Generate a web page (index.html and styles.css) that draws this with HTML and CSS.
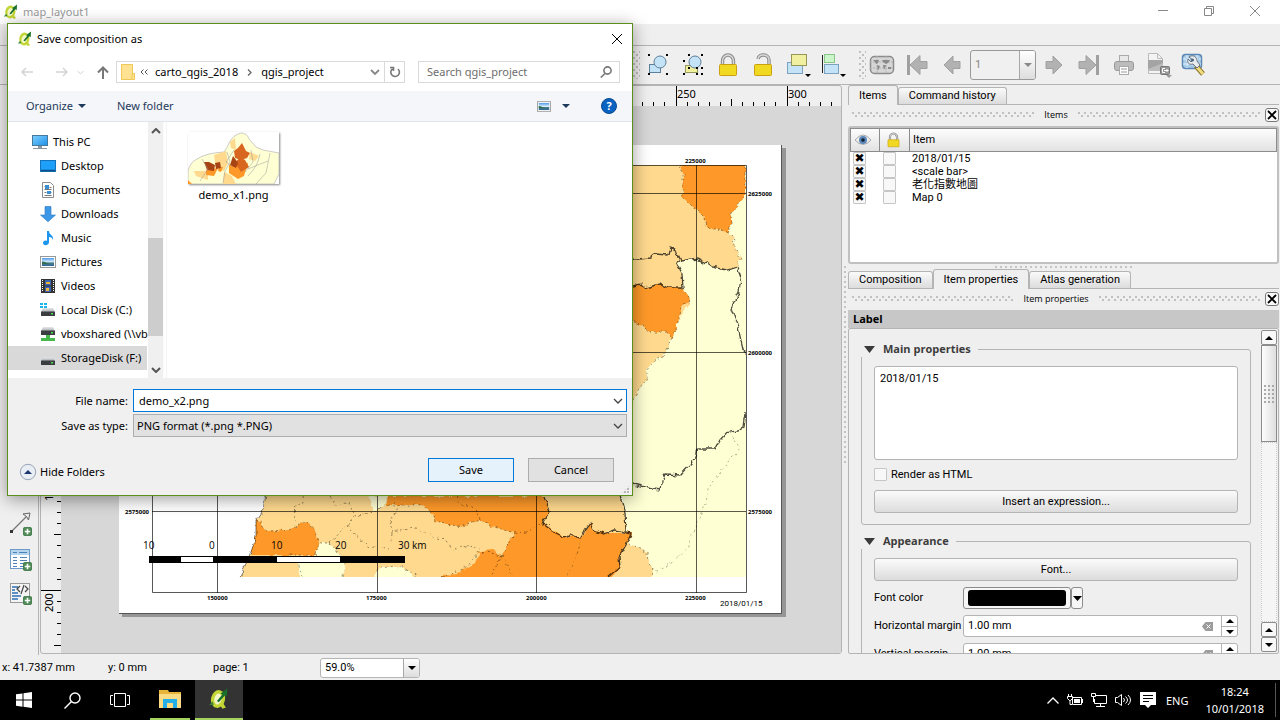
FILE: index.html
```html
<!DOCTYPE html>
<html lang="en">
<head>
<meta charset="utf-8">
<title>map_layout1</title>
<link rel="stylesheet" href="styles.css">
</head>
<body>
<svg class="defs" aria-hidden="true">
  <defs>
    <linearGradient id="blue" x1="0" y1="0" x2="1" y2="1"><stop offset="0" stop-color="#7fd0ff"/><stop offset="1" stop-color="#1e90e8"/></linearGradient>
    <linearGradient id="disk" x1="0" y1="0" x2="0" y2="1"><stop offset="0" stop-color="#e6e8ea"/><stop offset="1" stop-color="#a9adb1"/></linearGradient>
    <linearGradient id="sky" x1="0" y1="0" x2="0" y2="1"><stop offset="0" stop-color="#4f9ae8"/><stop offset=".5" stop-color="#dcefff"/><stop offset=".6" stop-color="#4a7d80"/><stop offset="1" stop-color="#2f6a9c"/></linearGradient>
    <symbol id="qgis" viewBox="0 0 16 16"><ellipse cx="7.300" cy="8" rx="3.900" ry="5.300" transform="rotate(12 7.300 8)" fill="#f3f7c8" stroke="#c3d636" stroke-width="2.400"/><path d="m8 11 2.500 4 2.500-.8-2-3.200z" fill="#c3d636"/><path d="M6.500 9.500 10.400 4.800 9 4.200 14 .4l-.3 5.800-1.300-.9-4.500 5z" fill="#18702a"/><path d="m.8 12.600 2.500-2.800 1 2.400z" fill="#3b8a38"/></symbol>
    <symbol id="chev" viewBox="0 0 10 6"><path d="m1 1 4 4 4-4" fill="none" stroke="currentColor" stroke-width="1.300"/></symbol>
    <symbol id="tri" viewBox="0 0 8 4"><path d="M0 0h8L4 4z" fill="currentColor"/></symbol>
    <symbol id="plus" viewBox="0 0 10 10"><rect x=".5" y=".5" width="9" height="9" rx="1.500" fill="#4f8c57" stroke="#3f7647"/><path d="M5 2v6M2 5h6" stroke="#fff" stroke-width="1.800"/></symbol>
    <symbol id="clear" viewBox="0 0 11 9"><path d="M3.500 0H11v9H3.500L0 4.500z" fill="#9b9b9b"/><path d="m4.500 2.500 4 4m0-4-4 4" stroke="#fff"/></symbol>
    <symbol id="lock" viewBox="0 0 20 24"><path d="M4.500 12V8a5.500 6 0 0 1 11 0v4" fill="none" stroke="#8a8a8a" stroke-width="3.400"/><path d="M4.500 12V8a5.500 6 0 0 1 11 0v4" fill="none" stroke="#dadada" stroke-width="1.400"/><rect x="1.500" y="11.500" width="17" height="11" rx="1" fill="#f2d921" stroke="#c9a011"/></symbol>
    <symbol id="disk-i" viewBox="0 0 16 16"><path d="M3 6h10l2 4H1z" fill="url(#disk)"/><rect x="1" y="9.500" width="14" height="4.500" rx=".6" fill="#3b3e41"/><rect x="11" y="11" width="2" height="1.500" fill="#4fe04f"/></symbol>
    <symbol id="photo" viewBox="0 0 16 12"><rect x=".5" y=".5" width="15" height="11" fill="#fff" stroke="#989898"/><rect x="2" y="2" width="12" height="8" fill="url(#sky)"/><path d="M2 5.500c3 0 5 2 8 2.500H2z" fill="#356d51"/></symbol>
    <symbol id="close" viewBox="0 0 12 12"><path d="m1 1 10 10M11 1 1 11" stroke="currentColor" fill="none"/></symbol>
    <symbol id="bigarrow" viewBox="0 0 20 20"><path d="M2 6.500h7V1l9 9-9 9v-5.500H2z" fill="#b2b2b2" stroke="#a0a0a0"/></symbol>
  </defs>
</svg>

<header class="titlebar">
  <svg class="ic16"><use href="#qgis"/></svg>
  <h1>map_layout1</h1>
  <div class="winbtns">
    <button type="button" aria-label="Minimize"><svg width="12" height="12"><path d="M1 5.500h10" stroke="#888"/></svg></button>
    <button type="button" aria-label="Restore"><svg width="12" height="12"><path d="M1.500 3.500h7v7h-7zM3.500 3.500v-2h7v7h-2" fill="none" stroke="#888"/></svg></button>
    <button type="button" aria-label="Close"><svg width="12" height="12" color="#888"><use href="#close"/></svg></button>
  </div>
</header>
<div class="menubar"></div>

<div class="toolbar">
  <i class="grip-v"></i>
  <button type="button" aria-label="Group"><svg width="24" height="24"><rect x="3.500" y="11.500" width="11" height="8" fill="#c5e3f6" stroke="#5d7f99"/><circle cx="14" cy="9" r="6" fill="#c5e3f6" stroke="#5d7f99"/><path d="M2 1h2v2H2zM20 1h2v2h-2zM2 20h2v2H2zM20 20h2v2h-2z"/></svg></button>
  <button type="button" aria-label="Ungroup"><svg width="24" height="24"><rect x="4.500" y="12.500" width="12" height="7" fill="#f1f09f" stroke="#97975a"/><circle cx="14" cy="9" r="6" fill="#c5e3f6" stroke="#5d7f99"/><path d="M7 1h2v2H7zM20 1h2v2h-2zM2 7h2v2H2zM2 20h2v2H2zM20 20h2v2h-2zM7 14h2v2H7zM15 14h2v2h-2zM20 14h2v2h-2zM15 20h2v2h-2z"/></svg></button>
  <button type="button" aria-label="Lock"><svg width="20" height="24"><use href="#lock"/></svg></button>
  <button type="button" aria-label="Unlock"><svg width="20" height="24"><path d="M5 6c1-6 11-5 11 1v5" fill="none" stroke="#8a8a8a" stroke-width="3.400"/><path d="M5 6c1-6 11-5 11 1v5" fill="none" stroke="#dadada" stroke-width="1.400"/><rect x="1.500" y="11.500" width="17" height="11" rx="1" fill="#f2d921" stroke="#c9a011"/></svg></button>
  <button type="button" aria-label="Raise"><svg width="26" height="26"><rect x="2.500" y="10.500" width="15" height="11" fill="#c5e3f6" stroke="#7ba3c0"/><rect x="6.500" y="2.500" width="15" height="11" fill="#f1f0a0" stroke="#97975a"/><path d="M20 22h6l-3 3z"/></svg></button>
  <button type="button" aria-label="Align"><svg width="26" height="26"><path d="M2.500 3v18" stroke="#222"/><rect x="4.500" y="2.500" width="10" height="8" fill="#ccf5cb" stroke="#8ac58a"/><rect x="4.500" y="12.500" width="14" height="9" fill="#c5e3f6" stroke="#7ba3c0"/><path d="M20 22h6l-3 3z"/></svg></button>
  <i class="grip-v"></i>
  <button type="button" class="atlas" aria-label="Preview atlas"><svg width="26" height="20"><rect x="1.500" y="1.500" width="23" height="17" rx="4" fill="#d6d6d6" stroke="#8b8b8b" stroke-width="1.500"/><path d="M8 1v18M17 1v18M1 7h24M1 13h24" stroke="#b2b2b2" stroke-dasharray="2 1"/><path d="M4 5h6l-1 3-2 1-1-2zM8 10l3 1-2 5zM13 5h8l-2 3-2 1-3-2zM14 10h3l-2 5zM19 12h3v2h-3z" fill="#8a8a8a"/></svg></button>
  <button type="button" aria-label="First feature"><svg width="22" height="22"><path d="M2.500 1v20" stroke="#a0a0a0" stroke-width="3"/><path d="M21 7.500h-7V1.500l-10 9.500 10 9.500V14.500h7z" fill="#b2b2b2" stroke="#a0a0a0"/></svg></button>
  <button type="button" aria-label="Previous feature"><svg class="flip" width="20" height="20"><use href="#bigarrow"/></svg></button>
  <div class="combo page-combo"><input type="text" value="1" aria-label="Atlas page"><button type="button" aria-label="Pages"><svg width="8" height="4"><use href="#tri"/></svg></button></div>
  <button type="button" aria-label="Next feature"><svg width="20" height="20"><use href="#bigarrow"/></svg></button>
  <button type="button" aria-label="Last feature"><svg width="22" height="22"><path d="M19.500 1v20" stroke="#a0a0a0" stroke-width="3"/><path d="M1 7.500h7V1.500l10 9.500-10 9.500V14.500H1z" fill="#b2b2b2" stroke="#a0a0a0"/></svg></button>
  <button type="button" aria-label="Print atlas"><svg width="22" height="22"><rect x="6.500" y="1.500" width="9" height="8" fill="#e8e8e8" stroke="#aaa"/><rect x="1.500" y="7.500" width="19" height="9" rx="2.500" fill="#bcbcbc" stroke="#999"/><rect x="6.500" y="12.500" width="9" height="8" fill="#fff" stroke="#aaa"/><path d="M8 15h6M8 18h6" stroke="#999"/></svg></button>
  <button type="button" aria-label="Export atlas"><svg width="26" height="26"><path d="M2.500 1.500h9l5 5v15h-14z" fill="#f4f4f4" stroke="#bbb"/><path d="M11.500 1.500v5h5" fill="none" stroke="#bbb"/><rect x="2" y="8" width="15" height="11" fill="#a4a4a4"/><path d="m2 17 15-6v8H2z" fill="#bcbcbc"/><rect x="14.500" y="14.500" width="9" height="8" rx="1" fill="#999" stroke="#777"/><path d="M19 16.500h-2.500v4H19m-1-2h4.500m-2-1.500 1.500 1.500-1.500 1.500" stroke="#fff" fill="none"/><path d="M20 23h6l-3 3z" fill="#999"/></svg></button>
  <button type="button" aria-label="Atlas settings"><svg width="26" height="26"><rect x="1.500" y="2.500" width="19" height="14" rx="3" fill="#a9cbea" stroke="#5c87b4" stroke-width="1.500"/><path d="M6 3v13M16 3v13M2 7h18M2 12h18" stroke="#e8f2fb" stroke-dasharray="3 1"/><path d="m15 14 7 8" stroke="#8d772c" stroke-width="5"/><path d="m16 15 6 7" stroke="#f0dc80" stroke-width="3"/><path d="M8 5c4-3 8 0 8 4l3 4-3 3-4-4c-4 1-6-1-5-5l3 3 2-2z" fill="#e9ecef" stroke="#68727c"/><circle cx="11.500" cy="8" r="1.500" fill="#4a5f78"/></svg></button>
</div>

<main class="main">
  <aside class="sidebar" aria-label="Tools">
    <button type="button" aria-label="Add shape"><svg width="28" height="24"><circle cx="5" cy="13" r="4" fill="#2f7ff0"/><use href="#plus" x="16" y="9" width="10" height="10"/><path d="M22 16h6l-3 3z"/></svg></button>
    <button type="button" aria-label="Add arrow"><svg width="24" height="24"><path d="M4 19 20 3" stroke="#777" stroke-width="1.300"/><path d="m15 2 7-1-1.500 7-2-3.500z" fill="#eee" stroke="#666"/><rect x="2" y="18" width="3" height="3" fill="#333"/><use href="#plus" x="15" y="15" width="9" height="9"/></svg></button>
    <button type="button" aria-label="Add table"><svg width="24" height="24"><rect x="2.500" y="2.500" width="19" height="19" fill="#fff" stroke="#6d9ac6"/><path d="M3 3h18v5H3z" fill="#b5d4ee"/><path d="M5 5.500h4m2 0h8M5 10.500h4m3 0h7M5 13.500h4m3 0h7M5 16.500h4m3 0h7M5 19.500h4m3 0h7" stroke="#4b82b8"/><use href="#plus" x="15" y="15" width="9" height="9"/></svg></button>
    <button type="button" aria-label="Add HTML"><svg width="24" height="24"><rect x="2.500" y="1.500" width="19" height="19" fill="#f4f4f4" stroke="#999"/><path d="M4 5h6M4 8h3M4 11h6M4 14h9M4 17h6" stroke="#5e90c5" stroke-width="2"/><path d="m12 4-3 3 3 3m5-6 3 3-3 3m-1-7-3 9" fill="none" stroke="#444" stroke-width="1.200"/><use href="#plus" x="15" y="14" width="9" height="9"/></svg></button>
  </aside>

  <section class="canvas" aria-label="Composition">
    <div class="corner"></div>
    <svg class="ruler-top" aria-hidden="true">
      <defs><pattern id="th" x="60" width="111" height="20" patternUnits="userSpaceOnUse"><path d="M.5 0v20M11.500 16v4M22.500 16v4M33.500 16v4M44.500 16v4M55.500 13v7M66.500 16v4M77.500 16v4M88.500 16v4M99.500 16v4" stroke="#000"/></pattern></defs>
      <rect width="100%" height="20" fill="url(#th)"/>
      <text x="616" y="12">250</text><text x="727" y="12">300</text>
    </svg>
    <svg class="ruler-left" aria-hidden="true">
      <defs><pattern id="tv" y="40" width="20" height="111" patternUnits="userSpaceOnUse"><path d="M0 .5h20M16 11.500h4M16 22.500h4M16 33.500h4M16 44.500h4M13 55.500h7M16 66.500h4M16 78.500h4M16 89.500h4M16 100.500h4" stroke="#000"/></pattern></defs>
      <rect width="20" height="100%" fill="url(#tv)"/>
      <text transform="translate(12 395) rotate(-90)">150</text><text transform="translate(12 506) rotate(-90)">200</text>
    </svg>
    <div class="view">
      <svg class="sheet" width="668" height="472" viewBox="119 145 668 472">
        <defs>
          <clipPath id="extent"><path d="M152 165h594v412H152z"/></clipPath>
          <filter id="rough" filterUnits="userSpaceOnUse" x="140" y="155" width="620" height="435" color-interpolation-filters="sRGB"><feTurbulence type="fractalNoise" baseFrequency=".15" numOctaves="2" seed="4"/><feDisplacementMap in="SourceGraphic" scale="6" xChannelSelector="R" yChannelSelector="G"/></filter>
        </defs>
        <path d="M122 148h664v469H122z" fill="#969696"/>
        <path d="M119 145h662v468H119z" fill="#fff"/>
        <path d="M781.500 145v468.500H119" fill="none" stroke="#555"/>
        <g clip-path="url(#extent)"><g filter="url(#rough)">
        <path d="M266 496 262 512 256 521V537L250 555 243 570 239 584H754V158H266z" fill="#fed98e"/>
        <g fill="#ffffd4">
          <path d="M754 158V584H652L653 568 648 563 647 553 628 543 632 533 627 532 625 513 620 496 620 410 633 400 640 388 647 380 646 370 655 360 663 357 672 338 678 323 690 300 683 288 682 273 677 264 681 261 697 258 705 262 712 267 727 270 737 267 741 257 736 250 733 238 728 233V158z"/>
          <path d="M298 563 315 555 320 543H330L340 555 344 563 343 584H302L298 570zM377 569 395 566 408 570 418 584H376zM369 496 373 512 383 507 388 496z"/>
        </g>
        <g fill="#fe9929">
          <path d="M680 158 683 173V193L681 197 697 210 705 218 707 227 728 233 731 227V213L745 198V158z"/>
          <path d="M630 286 641 284 645 288 660 284 668 288H683L690 300 682 307 678 323 672 338 667 332 650 332 630 318z"/>
          <path d="M256 521 261 522 262 528 267 531 290 530 300 524 308 522 315 530 319 543 315 555H250L256 537z"/>
          <path d="M388 496 386 505H423L432 513 435 522 463 527 480 520 493 527 515 533 510 540 502 555 492 550 480 551 475 563 463 570 457 574 442 575V584H606L620 567 619 557 632 533 603 533 593 530 590 523 582 537 563 536 542 523 550 512 544 496z"/>
        </g>
        <g class="dotted">
          <path d="M680 165 683 173V193L681 197 697 210 705 218 707 227 728 233 733 238 736 250 741 257 737 267M728 233 731 227V213L745 198 745 165"/>
          <path d="M683 288 690 300 682 307 678 323 672 338 667 332 650 332 633 320M672 338 663 357 655 360 647 370 647 380 640 388 633 400"/>
          <path d="M653 568 648 563 647 553 628 543M653 568 652 577"/>
          <path d="M256 521 261 522 262 528 267 531 290 530 300 524 308 522 315 530 319 543 315 555H287M302 496 303 502 294 508 296 522M302 577 298 563 315 555M320 543H330L340 555 344 563 343 577M330 496 335 505 349 504M330 543 347 525 355 515 348 503M355 516 373 512 386 505H423L432 513 435 522 463 527 480 520 493 527 515 533 502 555 480 551 463 570 442 577M347 525 355 535 370 547 390 548 392 533 412 528 427 533 437 538 445 540 452 551 462 546 480 549M392 533 390 520 398 508M376 569 395 566 408 570 418 577M457 496 460 504 475 508 480 520M515 533 527 532 542 523M582 537 576 558 567 577M502 555 513 577M502 555 491 577"/>
        </g>
        <path class="dotted faint" d="M730 432 740 448 725 467 710 485 707 498 697 523 687 548 673 563 658 571 653 568"/>
        <g class="dark">
          <path d="M625 260 650 258 655 254 668 255 670 247 677 252 681 261 697 258 705 262 712 267 727 270 737 267 741 278 739 292 731 308 738 327 743 350 750 357M681 261 677 264 682 273 683 288H668L660 284 645 288 641 284 633 286"/>
          <path d="M746 412 744 427 738 430 728 431 720 440 715 449H698L696 456 692 462 680 475 665 474 662 482 661 490 653 489 633 484"/>
          <path d="M544 496 550 512 542 523 555 533 563 537 570 535 580 538 585 530 590 523 593 530 603 534 615 530 631 534 626 545 619 557 620 567 608 577M620 496 625 513 626 532"/>
        </g>
        <path class="coast" d="M266 496 262 512 256 521V537L250 555 243 570 241 577"/>
        </g></g>
        <g class="grid"><path d="M217.500 165v428M377.500 165v428M536.500 165v428M696.500 165v428M152 193.500h594M152 352.500h594M152 511.500h594"/><path d="M152.500 165.500h594v427h-594z"/></g>
        <g class="coords">
          <text x="685" y="163">225000</text><text x="748" y="196">2625000</text><text x="748" y="355">2600000</text><text x="748" y="514">2575000</text><text x="125" y="514">2575000</text>
          <text x="207" y="600">150000</text><text x="366" y="600">175000</text><text x="526" y="600">200000</text><text x="685" y="600">225000</text>
        </g>
        <path d="M149.500 556.500h255v6h-255z" fill="#fff" stroke="#000"/><path d="M149 556h32v7h-32zM213 556h64v7h-64zM340 556h65v7h-65z"/>
        <g class="scale"><text x="143" y="549">10</text><text x="209" y="549">0</text><text x="271" y="549">10</text><text x="335" y="549">20</text><text x="398" y="549">30 km</text></g>
        <text class="date" x="720" y="606">2018/01/15</text>
      </svg>
    </div>
  </section>

  <i class="split-v"></i>

  <section class="dock">
    <div class="tabs first"><button type="button" class="on">Items</button><button type="button">Command history</button></div>
    <div class="dockhead"><i></i><h2>Items</h2><i></i><button type="button" class="dclose" aria-label="Close items"><svg width="10" height="10" viewBox="1 1 10 10"><path d="m2 2 8 8m0-8-8 8" stroke="#000" stroke-width="1.800"/></svg></button></div>
    <div class="listbox">
      <table>
        <thead><tr><th class="c-eye"><svg width="18" height="12"><path d="M1 6q8-10 16 0-8 9-16 0z" fill="#eee" stroke="#aaa"/><circle cx="9" cy="6" r="4" fill="#5a86b8"/><circle cx="9" cy="6" r="1.800" fill="#123"/></svg></th><th class="c-lock"><svg width="13" height="16"><use href="#lock"/></svg></th><th>Item</th></tr></thead>
        <tbody>
          <tr><td><input type="checkbox" checked aria-label="Show 2018/01/15"></td><td><input type="checkbox" aria-label="Lock 2018/01/15"></td><td>2018/01/15</td></tr>
          <tr><td><input type="checkbox" checked aria-label="Show scale bar"></td><td><input type="checkbox" aria-label="Lock scale bar"></td><td>&lt;scale bar&gt;</td></tr>
          <tr><td><input type="checkbox" checked aria-label="Show 老化指數地圖"></td><td><input type="checkbox" aria-label="Lock 老化指數地圖"></td><td lang="zh-Hant">老化指數地圖</td></tr>
          <tr><td><input type="checkbox" checked aria-label="Show Map 0"></td><td><input type="checkbox" aria-label="Lock Map 0"></td><td>Map 0</td></tr>
        </tbody>
      </table>
    </div>
    <i class="split-h"></i>
    <div class="tabs second"><button type="button">Composition</button><button type="button" class="on">Item properties</button><button type="button">Atlas generation</button></div>
    <div class="dockhead"><i></i><h2>Item properties</h2><i></i><button type="button" class="dclose" aria-label="Close item properties"><svg width="10" height="10" viewBox="1 1 10 10"><path d="m2 2 8 8m0-8-8 8" stroke="#000" stroke-width="1.800"/></svg></button></div>
    <h3 class="labelbar">Label</h3>
    <div class="props">
      <div class="form">
        <fieldset>
          <legend><svg width="11" height="7"><path d="M0 0h11L5.500 7z" fill="#3a3a3a"/></svg>Main properties</legend>
          <textarea aria-label="Label text">2018/01/15</textarea>
          <label class="check"><input type="checkbox">Render as HTML</label>
          <button type="button" class="qbtn">Insert an expression...</button>
        </fieldset>
        <fieldset>
          <legend><svg width="11" height="7"><path d="M0 0h11L5.500 7z" fill="#3a3a3a"/></svg>Appearance</legend>
          <button type="button" class="qbtn">Font...</button>
          <div class="frow"><label for="fc">Font color</label><div class="color"><button type="button" id="fc"><span></span></button><button type="button" aria-label="Color menu"><svg width="9" height="5"><path d="M0 0h9L4.500 5z"/></svg></button></div></div>
          <div class="frow"><label for="hm">Horizontal margin</label><div class="spin"><input id="hm" type="text" value="1.00 mm"><svg width="11" height="9"><use href="#clear"/></svg><span><button type="button" aria-label="Increase"><svg width="8" height="4"><path d="M0 4h8L4 0z"/></svg></button><button type="button" aria-label="Decrease"><svg width="8" height="4"><use href="#tri"/></svg></button></span></div></div>
          <div class="frow"><label for="vm">Vertical margin</label><div class="spin"><input id="vm" type="text" value="1.00 mm"><svg width="11" height="9"><use href="#clear"/></svg><span><button type="button" aria-label="Increase"><svg width="8" height="4"><path d="M0 4h8L4 0z"/></svg></button><button type="button" aria-label="Decrease"><svg width="8" height="4"><use href="#tri"/></svg></button></span></div></div>
        </fieldset>
      </div>
      <div class="qscroll">
        <button type="button" aria-label="Scroll up"><svg width="8" height="4"><path d="M0 4h8L4 0z"/></svg></button>
        <div class="thumb"><i></i></div><div class="track"></div>
        <button type="button" aria-label="Page up"><svg width="8" height="4"><path d="M0 4h8L4 0z"/></svg></button>
        <button type="button" aria-label="Scroll down"><svg width="8" height="4"><use href="#tri"/></svg></button>
      </div>
    </div>
  </section>
</main>

<footer class="status">
  <span class="s1">x: 41.7387 mm</span><span class="s2">y: 0 mm</span><span class="s3">page: 1</span>
  <div class="combo zoom-combo"><input type="text" value="59.0%" aria-label="Zoom"><button type="button" aria-label="Zoom levels"><svg width="8" height="4"><use href="#tri"/></svg></button></div>
</footer>

<nav class="taskbar" aria-label="Taskbar">
  <button type="button" aria-label="Start"><svg width="16" height="16" fill="#fff"><path d="M0 2.300 6.500 1.400v6.200H0zM7.500 1.300 16 0v7.600H7.500zM0 8.500h6.500v6.200L0 13.800zM7.500 8.500H16V16l-8.500-1.200z"/></svg></button>
  <button type="button" aria-label="Search"><svg width="17" height="17" fill="none" stroke="#fff" stroke-width="1.400"><circle cx="11" cy="6" r="5"/><path d="m7.500 9.500-7 7"/></svg></button>
  <button type="button" aria-label="Task view"><svg width="20" height="16" fill="none" stroke="#fff"><path d="M4.500 1.500h11v13h-11zM3 3.500H.5v9H3M17 3.500h2.500v9H17"/></svg></button>
  <button type="button" class="run" aria-label="File Explorer"><svg width="22" height="20"><path d="M0 1h9l1 2h12v16H0z" fill="#e8b53a"/><path d="M0 5h22v14H0z" fill="#fbdc84"/><path d="M4 10h14v9h-4v-5H8v5H4z" fill="#24aee8"/></svg></button>
  <button type="button" class="run active" aria-label="QGIS"><svg width="22" height="24"><use href="#qgis"/></svg></button>
  <div class="tray">
    <svg width="12" height="7" fill="none" stroke="#fff" stroke-width="1.300"><path d="m.5 6.500 5.500-5.500 5.500 5.500"/></svg>
    <svg width="16" height="12" fill="none" stroke="#fff"><path d="M5.500 3.500h9v7h-9zM15.500 5v4M1.500 0v2M4.500 0v2M.5 2.500h5v2l-2 2h-1l-2-2zM3 6v4.500h2"/><path d="M7 5h6v4H7z" fill="#fff" stroke="none"/></svg>
    <svg width="16" height="14" fill="none" stroke="#fff"><path d="M5 2.500h10.500v8H3.500V6M9.500 11v2M5 13.500h9M.5.500h4v3h-4zM2.500 4v5"/></svg>
    <svg width="17" height="14" fill="none" stroke="#fff"><path d="M.5 4.500h2l4-3v11l-4-3h-2zM8.500 5q2 2 0 4M10.500 3.500q4 3.500 0 7M13 2q5 5 0 10"/></svg>
    <svg width="16" height="16"><path d="M0 0h16v13h-5l-3 3-3-3H0z" fill="#fff"/><path d="M3 3.500h10M3 6.500h10M3 9.500h6" stroke="#000"/></svg>
    <span class="lang">ENG</span>
    <time class="clock">18:24<br>10/01/2018</time>
  </div>
</nav>

<div class="dialog" role="dialog" aria-labelledby="dt">
  <div class="dtitle"><svg class="ic16"><use href="#qgis"/></svg><h2 id="dt">Save composition as</h2><button type="button" aria-label="Close dialog"><svg width="12" height="12"><use href="#close"/></svg></button></div>
  <div class="nav">
    <button type="button" class="n1" aria-label="Back"><svg width="12" height="10" fill="none" stroke="#d3d3d3" stroke-width="1.500"><path d="M12 5H1m4-4L1 5l4 4"/></svg></button>
    <button type="button" class="n2" aria-label="Forward"><svg width="12" height="10" fill="none" stroke="#d3d3d3" stroke-width="1.500"><path d="M0 5h11M7 1l4 4-4 4"/></svg></button>
    <button type="button" class="n3" aria-label="Recent"><svg width="7" height="5" color="#ccc"><use href="#chev"/></svg></button>
    <button type="button" class="n4" aria-label="Up"><svg width="12" height="13" fill="none" stroke="#777" stroke-width="2"><path d="M6 13V2M1 6.500l5-5 5 5"/></svg></button>
    <div class="address">
      <svg width="14" height="16"><path d="M.5.500h11v15H.5z" fill="#ffe292" stroke="#eec95a"/><path d="M11.500 9.500h2v6h-3z" fill="#ffe292" stroke="#eec95a"/></svg>
      <svg class="dbl" width="8" height="6" fill="none" stroke="#555"><path d="M3.500.500 1 3l2.500 2.500M7.500.500 5 3l2.500 2.500"/></svg>
      <span>carto_qgis_2018</span>
      <svg class="sep" width="5" height="7" fill="none" stroke="#666" stroke-width="1.300"><path d="m1 .5 3 3-3 3"/></svg>
      <span>qgis_project</span>
      <button type="button" class="hist" aria-label="Previous locations"><svg width="10" height="6"><path d="m1 1 4 4 4-4" fill="none" stroke="#888" stroke-width="1.800"/></svg></button>
      <button type="button" class="refresh" aria-label="Refresh"><svg width="12" height="12" fill="none" stroke="#777" stroke-width="1.600"><path d="M3.500 2.800A4.300 4.300 0 1 0 9 3M1 1.500h3.500V5"/></svg></button>
    </div>
    <div class="search"><input type="text" placeholder="Search qgis_project" aria-label="Search"><svg width="12" height="12" fill="none" stroke="#777" stroke-width="1.600"><circle cx="7.500" cy="4.500" r="3.600"/><path d="M5 7.500.8 11.500"/></svg></div>
  </div>
  <div class="dbar">
    <button type="button" class="org">Organize <svg width="8" height="4"><use href="#tri"/></svg></button><button type="button">New folder</button>
    <button type="button" class="vw" aria-label="View"><svg width="14" height="11"><use href="#photo"/></svg><svg width="8" height="4"><use href="#tri"/></svg></button>
    <button type="button" class="help" aria-label="Help">?</button>
  </div>
  <div class="dbody">
    <ul class="tree">
      <li class="root"><svg viewBox="0 0 16 16"><rect x=".5" y="1.500" width="15" height="10" fill="url(#blue)" stroke="#46799c"/><path d="M6 12h4v2H6zM1 14h14v1H1z" fill="#8c98a4"/></svg>This PC</li>
      <li><svg viewBox="0 0 16 16"><rect x=".5" y="2.500" width="15" height="11" fill="#1ea0fa" stroke="#1273b8"/><path d="M1 12.500h14" stroke="#0c4d85" stroke-width="1.500"/></svg>Desktop</li>
      <li><svg viewBox="0 0 16 16"><path d="M2.500.500h8l3 3v12h-11z" fill="#fff" stroke="#8b8b8b"/><path d="M4.500 4.500h2m3 1h2M4.500 7.500h7M4.500 10.500h2m3 0h2M4.500 13.500h7" stroke="#777"/><path d="M5 3h4v4H5zM7 9h4v3H7z" fill="#3b8fd0"/></svg>Documents</li>
      <li><svg viewBox="0 0 16 16"><path d="M5 .5h6V9h4.500L8 15.800.5 9H5z" fill="#3b98e6" stroke="#2b78c0" stroke-width=".6"/></svg>Downloads</li>
      <li><svg viewBox="0 0 16 16"><path d="M7 1h2c0 4 5 4 4 9-1-3-3-3-4-3v5c0 4-6 4-6 1 0-2 2-3 4-2z" fill="#1b95f0"/></svg>Music</li>
      <li><svg viewBox="0 0 16 12"><use href="#photo"/></svg>Pictures</li>
      <li><svg viewBox="0 0 16 16"><rect x="1" y="1" width="14" height="14" fill="#333"/><path d="M2.500 2v12M13.500 2v12" stroke="#fff" stroke-dasharray="1 1"/><path d="M5 2h6v5.500H5zM5 8.500h6V14H5z" fill="#3c63b0"/><path d="M6 4h4v2H6zM6 10h3v3H6z" fill="#e7b53b"/></svg>Videos</li>
      <li><svg viewBox="0 0 16 16"><path d="M0 1h3v2H0zM4 1h3v2H4zM0 4h3v2H0zM4 4h3v2H4z" fill="#1bb5ea"/><use href="#disk-i"/></svg>Local Disk (C:)</li>
      <li><svg viewBox="0 0 16 16"><use href="#disk-i" y="-5"/><path d="M6 9h4v3h5v3H1v-3h5z" fill="#47b84b"/></svg>vboxshared (\\vb</li>
      <li class="sel"><svg viewBox="0 0 16 16"><use href="#disk-i" y="1"/></svg>StorageDisk (F:)</li>
    </ul>
    <div class="dscroll"><svg width="10" height="6"><path d="m1 5 4-4 4 4" fill="none" stroke="#555" stroke-width="2"/></svg><div></div><svg width="10" height="6"><path d="m1 1 4 4 4-4" fill="none" stroke="#555" stroke-width="2"/></svg></div>
    <div class="files">
      <figure>
        <svg width="91" height="52" viewBox="0 0 91 52"><path fill="#fff" d="M0 0h91v52H0z"/><path d="M0 52V40q1-9 9-13 9-6 27-7 3-4 5-9 4-8 12-10 6 0 8 6l7 8 7 3 16 3v21l-5 10z" fill="#ffffd4" stroke="#aaa" stroke-width=".6"/><path d="M26 23l12-4 2 12-4 8-8-2zM42 10l5-4 1 12-5-2zM6 39l14 0v9l-12-4zM36 40l8 4 4 8H35zM62 20l9 4-4 5-6-2z" fill="#fed98e"/><path d="M41 33l19-2-4 13-6 3-9-6zM18 38l12-2-4 8-8-1zM0 48l4 4H0zM31 35l4 0-2 5-3-1z" fill="#fe9929"/><path d="M46 19l4-3 4-5 2 4 2 4 4 2-3 5-6 2-6-2zM52 25l5 3 4 7-8 5-6-9z" fill="#d9661f"/><path d="M16 30l5 0 6 3-1 6-7-1zM27 31l5-1 1 6-5 1zM45 24l3 4 2 3-2 5-6-3z" fill="#a84313"/><path d="M39 20l3 10-5 9-2 12M46 18l-8 12 6 4M14 27l6 10-8 12M63 18l2 12-8 10M72 22q-2 12-12 22M82 21l-4 20-10 11M60 37l20-8" fill="none" stroke="#999" stroke-width=".5"/></svg>
        <figcaption>demo_x1.png</figcaption>
      </figure>
    </div>
  </div>
  <div class="dfoot">
    <div class="drow"><label for="fn">File name:</label><div class="dfield fname"><input id="fn" type="text" value="demo_x2.png"><svg width="10" height="6"><use href="#chev"/></svg></div></div>
    <div class="drow"><label for="ft">Save as type:</label><div class="dfield ftype"><select id="ft"><option>PNG format (*.png *.PNG)</option></select><svg width="10" height="6"><use href="#chev"/></svg></div></div>
    <div class="actions">
      <button type="button" class="hide"><svg width="18" height="18"><circle cx="9" cy="9" r="7.700" fill="#e9edf4" stroke="#9aa4b8"/><path d="M5 11h8L9 7z" fill="#1a3770"/></svg>Hide Folders</button>
      <button type="button" class="wbtn primary">Save</button><button type="button" class="wbtn">Cancel</button>
    </div>
    <i class="resize"></i>
  </div>
</div>
</body>
</html>
```
FILE: styles.css
```css
* { box-sizing: border-box; }
body { margin: 0; height: 100vh; display: flex; flex-direction: column; overflow: hidden; position: relative; background: #efefef; color: #000; font: 11px/14px Roboto, "Noto Sans", "Noto Sans CJK TC", sans-serif; }
button, input, textarea, select { font: inherit; color: inherit; margin: 0; }
button { padding: 0; border: 0; background: none; display: flex; align-items: center; justify-content: center; }
h1, h2, h3, ul, figure { margin: 0; padding: 0; font-size: inherit; font-weight: normal; }
svg { display: block; flex: none; }
.defs { position: absolute; width: 0; height: 0; }
.ic16 { width: 16px; height: 16px; }

.titlebar { flex: none; height: 24px; background: #fff; display: flex; align-items: center; padding-left: 3px; gap: 4px; color: #999; font-family: "Noto Sans", sans-serif; }
.winbtns { margin-left: auto; display: flex; align-self: flex-start; padding-right: 2px; }
.winbtns button { width: 46px; height: 21px; }
.menubar { flex: none; height: 21px; }
.toolbar { flex: none; height: 40px; border-top: 1px solid #b4b4b4; border-bottom: 1px solid #b4b4b4; padding-left: 633px; display: flex; align-items: center; overflow: hidden; }
.toolbar > button { width: 35px; height: 34px; flex: none; }
.toolbar > .atlas { width: 32px; margin-right: 1px; }
.grip-v { flex: none; width: 7px; height: 28px; background-image: radial-gradient(circle at 1px 1px, #c0c0c0 1px, transparent 1px), radial-gradient(circle at 4px 4px, #c0c0c0 1px, transparent 1px); background-size: 6px 6px; }
.toolbar button + .grip-v { margin-left: 9px; }
.flip { transform: scaleX(-1); }
.combo { display: flex; background: #f8f8f8; border: 1px solid #999; border-radius: 3px; }
.combo input { min-width: 0; flex: 1; border: 0; background: none; padding: 0 4px; }
.combo button { width: 16px; border-left: 1px solid #a8a8a8; background: linear-gradient(#fff, #ddd); border-radius: 0 2px 2px 0; }
.page-combo { width: 66px; height: 30px; flex: none; background: #f0f0f0; color: #888; margin-left: 1px; }

.main { flex: 1; min-height: 0; display: grid; grid-template-columns: 39px minmax(0, 1fr) 6px 432px; }
.sidebar { display: flex; flex-direction: column; justify-content: flex-end; align-items: center; padding: 0 0 44px 2px; border-right: 1px solid #b4b4b4; }
.sidebar button { height: 35px; width: 36px; }
.canvas { margin-left: 1px; border: 1px solid #b4b4b4; border-radius: 3px; display: grid; grid-template: 20px minmax(0, 1fr) / 20px minmax(0, 1fr); min-height: 0; margin-bottom: 1px; }
.ruler-top, .ruler-left { width: 100%; height: 100%; }
.ruler-top text, .ruler-left text { font: 11px "Noto Sans", sans-serif; }
.view { background: #d7d7d7; padding: 39px 0 0 58px; overflow: hidden; }
.dotted, .dark path, .coast { fill: none; stroke: #000; }
.dotted { stroke-opacity: .4; stroke-dasharray: 2 3; }
.faint { stroke-opacity: .3; }
.dark path { stroke-opacity: .7; stroke-width: 1.300; }
.coast { stroke-opacity: .5; }
.grid { fill: none; stroke: #000; stroke-opacity: .65; }
.coords { font: 700 6px "Noto Sans", sans-serif; }
.scale { font: 10px "Open Sans", sans-serif; }
.date { font: 8px Roboto, sans-serif; }
.split-v { margin: 180px 1px 190px; background: radial-gradient(circle at 2px 2px, #c4c4c4 1px, transparent 1px) 0 0 / 4px 5px; }

.dock { display: flex; flex-direction: column; min-height: 0; padding: 0 1px 0 0; }
.tabs { flex: none; display: flex; align-items: flex-end; height: 20px; border-bottom: 1px solid #b4b4b4; }
.tabs button { height: 17px; padding: 0 10px; background: linear-gradient(#fafafa, #dcdcdc); border: 1px solid #b4b4b4; border-radius: 3px 3px 0 0; border-bottom: 0; }
.tabs .on { height: 20px; margin-bottom: -1px; background: #efefef; }
.dockhead { flex: none; height: 21px; display: flex; align-items: center; gap: 10px; padding: 0 0 2px 4px; font: 9px/14px "Open Sans", sans-serif; }
.dockhead i { flex: 1; height: 5px; background-image: radial-gradient(circle at 1px 1px, #c0c0c0 1px, transparent 1px), radial-gradient(circle at 4px 4px, #c0c0c0 1px, transparent 1px); background-size: 6px 5px; }
.dclose { width: 14px; height: 14px; margin-left: -5px; border: 1px solid #777; border-radius: 3px; background: #fafafa; }
.listbox { flex: none; height: 138px; border: 2px solid #c0c0c0; border-radius: 3px; background: #fff; }
.listbox table { width: 100%; border-collapse: separate; border-spacing: 0; table-layout: fixed; }
.listbox th { height: 24px; padding: 0 3px; text-align: left; font-weight: normal; border: 1px solid #8c8c8c; border-left-width: 0; background: linear-gradient(#fdfdfd, #e2e2e2); }
.listbox th.c-eye { width: 30px; border-left-width: 1px; }
.listbox th.c-lock { width: 30px; padding-left: 7px; }
.listbox td { height: 13px; padding: 0 2px; line-height: 13px; white-space: nowrap; }
.listbox td:first-child, .listbox td:nth-child(2) { padding-left: 3px; }
input[type=checkbox] { appearance: none; display: grid; place-items: center; flex: none; width: 13px; height: 13px; border: 1px solid #c6c6c6; border-radius: 1px; background: #f8f8f8; }
input[type=checkbox]:checked::before { content: "✖"; font: 12px/11px "DejaVu Sans", sans-serif; }
.split-h { flex: none; align-self: center; width: 140px; height: 5px; background: radial-gradient(circle at 2px 3px, #c4c4c4 1px, transparent 1px) 0 0 / 5px 5px; }
.labelbar { flex: none; height: 18px; background: #c7c7c7; font: 700 11px/18px "Open Sans", sans-serif; padding-left: 5px; }
.props { flex: 1; min-height: 0; display: flex; margin-bottom: 1px; border: 1px solid #b4b4b4; border-radius: 2px; }
.form { flex: 1; min-width: 0; overflow: hidden; padding: 12px 10px 0 12px; }
fieldset { margin: 0 0 8px; padding: 9px 12px 11px; border: 1px solid #b4b4b4; border-radius: 3px; min-width: 0; display: flow-root; }
legend { display: flex; align-items: center; gap: 8px; margin-left: -13px; padding: 0 7px 0 3px; height: 16px; font: 700 11px/14px "Open Sans", sans-serif; color: #3c3c3c; background: #efefef; }
textarea { display: block; width: 100%; height: 94px; resize: none; border: 1px solid #b4b4b4; border-radius: 3px; padding: 5px; background: #fff; outline: 0; }
.check { display: flex; align-items: center; gap: 4px; margin: 8px 0 9px; height: 13px; }
.qbtn { width: 100%; height: 23px; border: 1px solid #b4b4b4; border-radius: 3px; background: linear-gradient(#fbfbfb, #dcdcdc); }
.frow { display: grid; grid-template-columns: 89px minmax(0, 1fr); align-items: center; margin-top: 6px; height: 22px; white-space: nowrap; }
.color { display: flex; height: 22px; }
.color button { border: 1px solid #8c8c8c; border-radius: 3px; width: 12px; background: #f6f6f6; }
.color button:first-child { width: 108px; padding: 2px 4px; align-items: stretch; }
.color span { flex: 1; background: #000; border-radius: 3px; }
.spin { display: flex; align-items: center; height: 22px; border: 1px solid #b4b4b4; border-radius: 3px; background: #fff; }
.spin input { flex: 1; min-width: 0; border: 0; background: none; padding: 0 4px; }
.spin > span { margin-left: 8px; width: 16px; height: 20px; display: grid; grid-template-rows: 1fr 1fr; border-left: 1px solid #b4b4b4; }
.spin span button + button { border-top: 1px solid #b4b4b4; }
.qscroll { flex: none; width: 17px; display: flex; flex-direction: column; padding: 1px 1px 1px 0; }
.qscroll button { height: 15px; flex: none; border: 1px solid #8c8c8c; border-radius: 2px; background: #f8f8f8; }
.thumb { height: 97px; border: 1px solid #8c8c8c; background: linear-gradient(90deg, #fdfdfd, #dedede); display: grid; place-items: center; }
.thumb i { width: 10px; height: 18px; background: radial-gradient(circle at 1px 1px, #aaa 1px, transparent 1px) 0 0 / 4px 4px; }
.track { flex: 1; background: #f5f5f5; border: 1px dotted #ccc; }

.status { flex: none; height: 25px; display: flex; align-items: center; padding-left: 2px; }
.s1 { width: 106px; } .s2 { width: 105px; } .s3 { width: 107px; }
.zoom-combo { width: 100px; height: 20px; background: #fff; border-color: #b4b4b4; }

.taskbar { flex: none; height: 40px; background: #000; color: #fff; display: flex; }
.taskbar > button { width: 48px; height: 40px; }
.taskbar > .run { width: 40px; margin-left: 6px; border-bottom: 2px solid #a2d45e; }
.taskbar > .active { width: 48px; margin-left: 5px; background: #333; }
.tray { margin-left: auto; display: flex; align-items: center; gap: 8px; padding-right: 4px; font: 11px/17px "Noto Sans", sans-serif; }
.lang { margin: 0 2px; }
.clock { text-align: center; padding: 0 11px 0 7px; border-right: 1px solid #555; line-height: 17px; }

.dialog { position: absolute; left: 7px; top: 23px; width: 626px; height: 473px; border: 1px solid #5a8f1e; background: #fff; box-shadow: 0 3px 16px rgba(0,0,0,.4); display: flex; flex-direction: column; font-family: "Noto Sans", sans-serif; line-height: 16px; }
.dtitle { flex: none; height: 30px; display: flex; align-items: center; padding: 0 9px; gap: 4px; }
.dtitle button { margin-left: auto; }
.nav { flex: none; height: 37px; display: flex; align-items: center; padding: 0 12px 1px 13px; }
.n1, .n4 { width: 12px; } .n2 { width: 12px; margin-left: 23px; } .n3 { width: 7px; margin: 0 13px 0 9px; } .n4 { margin-right: 7px; }
.address { flex: 283; min-width: 0; height: 22px; border: 1px solid #d9d9d9; display: flex; align-items: center; padding-left: 4px; }
.dbl { margin: 0 7px 0 5px; }
.sep { margin: 0 9px; }
.hist { margin-left: auto; width: 18px; height: 20px; }
.refresh { width: 20px; height: 20px; border-left: 1px solid #d9d9d9; }
.search { flex: 193; min-width: 0; margin-left: 13px; height: 22px; border: 1px solid #d9d9d9; display: flex; align-items: center; padding-right: 7px; }
.search input { flex: 1; min-width: 0; border: 0; padding: 0 8px; background: none; }
.search input::placeholder { color: #6d6d6d; opacity: 1; }
.dbar { flex: none; height: 31px; background: #f4f6f9; border-bottom: 1px solid #e2e6ea; display: flex; align-items: center; color: #1e395b; padding: 0 15px 0 18px; gap: 31px; }
.org { gap: 5px; }
.vw { margin-left: auto; gap: 11px; }
.help { width: 16px; height: 16px; border-radius: 50%; background: #0a63c0; border: 1px solid #0b4a91; color: #fff; font-weight: 700; line-height: 12px; }
.dbody { flex: 1; min-height: 0; display: flex; }
.tree { flex: none; width: 140px; padding-top: 8px; list-style: none; overflow: hidden; }
.tree li { height: 24px; display: flex; align-items: center; gap: 5px; padding-left: 32px; margin-right: 1px; white-space: nowrap; }
.tree .root { padding-left: 24px; }
.tree svg { width: 16px; height: 16px; }
.sel { background: #d9d9d9; }
.dscroll { flex: none; width: 16px; background: #f0f0f0; display: flex; flex-direction: column; align-items: center; padding: 6px 0 5px; border-right: 1px solid #fafafa; }
.dscroll div { width: 15px; height: 98px; margin: 104px 0 auto; background: #cdcdcd; }
.files { flex: 1; border-left: 1px solid #f4f4f4; margin-left: 2px; padding: 10px 21px; }
.files figure { width: 91px; text-align: center; white-space: nowrap; }
.files figure svg { box-shadow: 1px 1px 2px #888; }
.files figcaption { margin-top: 3px; }
.dfoot { flex: none; height: 117px; background: #f0f0f0; padding: 11px 5px 0 12px; position: relative; }
.drow { display: grid; grid-template-columns: 108px minmax(0, 1fr); column-gap: 5px; margin-bottom: 2px; align-items: center; }
.drow label { text-align: right; }
.dfield { display: flex; align-items: center; height: 23px; border: 1px solid #adadad; background: #e1e1e1; padding-right: 3px; color: #444; }
.dfield input, .dfield select { flex: 1; min-width: 0; height: 21px; border: 0; background: none; color: #000; padding: 0 5px; outline: 0; appearance: none; }
.dfield select { padding: 0 3px; }
.fname { background: #fff; border-color: #0078d7; }
.actions { display: flex; align-items: center; gap: 14px; margin: 21px 13px 0 -1px; }
.hide { margin: 4px auto 0 0; gap: 3px; }
.wbtn { width: 86px; height: 24px; border: 1px solid #adadad; background: #e1e1e1; }
.primary { background: #e5f1fb; border-color: #0078d7; }
.resize { position: absolute; right: 2px; bottom: 1px; width: 9px; height: 9px; background: radial-gradient(circle at 1px 1px, #b8b8b8 1px, transparent 1px) 0 0 / 3px 3px; clip-path: polygon(100% 0, 100% 100%, 0 100%); }
```
